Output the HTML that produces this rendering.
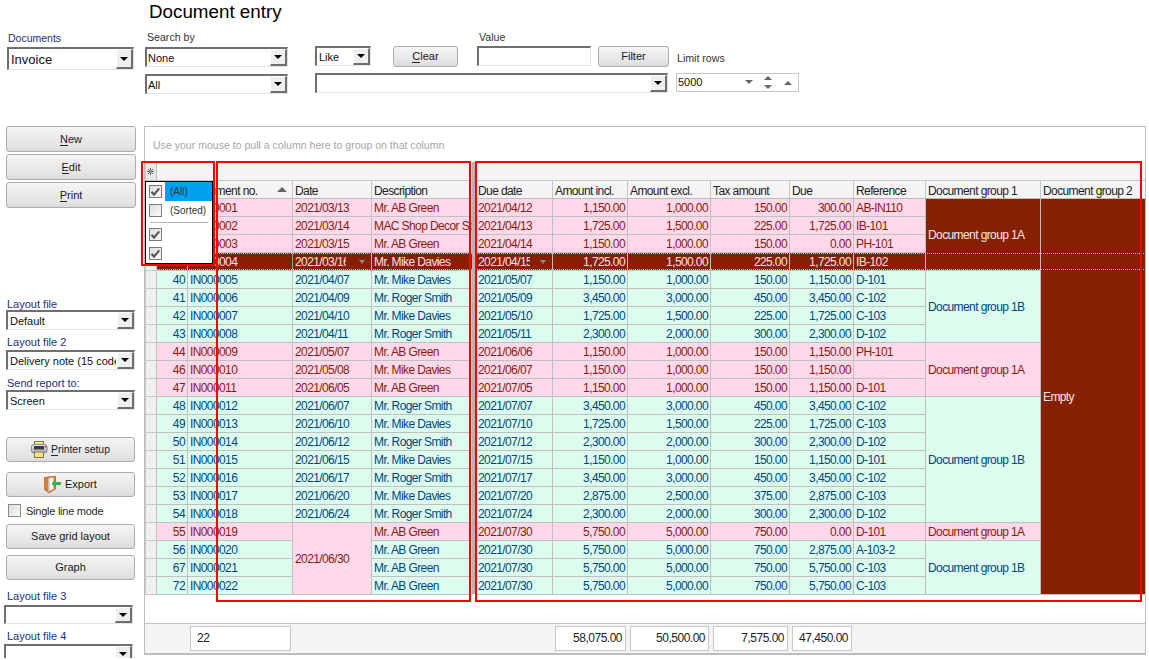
<!DOCTYPE html><html><head><meta charset="utf-8"><style>
*{margin:0;padding:0;box-sizing:border-box}
html,body{width:1149px;height:660px;overflow:hidden;background:#fff}
body{position:relative;font-family:"Liberation Sans",sans-serif;font-size:11px;color:#222}
div{position:absolute}
.t{white-space:nowrap;line-height:13px}
.lbl{white-space:nowrap;line-height:13px;color:#24307a}
.btn{border:1px solid #adadad;border-radius:3px;background:linear-gradient(#f5f5f5,#ebebeb 45%,#e2e2e2 85%,#d9d9d9);color:#1a1a1a;text-align:center;white-space:nowrap}
.cmb{background:#fff;border-top:2px solid #6f6f6f;border-left:2px solid #6f6f6f;border-bottom:1px solid #e3e3e3;border-right:1px solid #e3e3e3}
.cbb{background:#efefef;border-top:1px solid #fff;border-left:1px solid #fff;border-bottom:2px solid #6f6f6f;border-right:2px solid #6f6f6f}
.arr{width:0;height:0;border-left:4px solid transparent;border-right:4px solid transparent;border-top:4px solid #000}
.cell{white-space:nowrap;overflow:hidden;line-height:17px;padding-left:2px;padding-top:1px;font-size:12px;letter-spacing:-0.6px}
.r{text-align:right;padding-left:0;padding-right:2px}
u{text-decoration:none;border-bottom:1px solid #222}
</style></head><body><div class="t" style="left:149px;top:1px;font-size:18.8px;line-height:22px;color:#000">Document entry</div>
<div class="lbl" style="left:8px;top:32px;font-size:10.5px">Documents</div>
<div class="cmb" style="left:7px;top:47px;width:127px;height:23px;"></div>
<div class="cbb" style="left:116px;top:49px;width:17px;height:20px"></div>
<div class="arr" style="left:120px;top:57px"></div>
<div class="t" style="left:11px;top:50px;font-size:13px;line-height:19px;width:104px;overflow:hidden;color:#111">Invoice</div>
<div class="t" style="left:147px;top:31px;font-size:10.6px;color:#333">Search by</div>
<div class="cmb" style="left:145px;top:47px;width:143px;height:20px;"></div>
<div class="cbb" style="left:270px;top:49px;width:17px;height:17px"></div>
<div class="arr" style="left:274px;top:55px"></div>
<div class="t" style="left:148px;top:50px;font-size:11px;line-height:16px;width:120px;overflow:hidden;color:#111">None</div>
<div class="cmb" style="left:145px;top:74px;width:143px;height:20px;"></div>
<div class="cbb" style="left:270px;top:76px;width:17px;height:17px"></div>
<div class="arr" style="left:274px;top:82px"></div>
<div class="t" style="left:148px;top:77px;font-size:11px;line-height:16px;width:120px;overflow:hidden;color:#111">All</div>
<div class="cmb" style="left:315px;top:46px;width:56px;height:20px;"></div>
<div class="cbb" style="left:353px;top:48px;width:17px;height:17px"></div>
<div class="arr" style="left:357px;top:54px"></div>
<div class="t" style="left:319px;top:49px;font-size:11px;line-height:16px;width:33px;overflow:hidden;color:#111">Like</div>
<div class="cmb" style="left:315px;top:73px;width:353px;height:20px;"></div>
<div class="cbb" style="left:650px;top:75px;width:17px;height:17px"></div>
<div class="arr" style="left:654px;top:81px"></div>
<div class="btn" style="left:393px;top:46px;width:65px;height:21px;line-height:19px;"><u>C</u>lear</div>
<div class="t" style="left:479px;top:31px;font-size:10.6px;color:#333">Value</div>
<div class="cmb" style="left:477px;top:46px;width:114px;height:20px"></div>
<div class="btn" style="left:598px;top:46px;width:71px;height:21px;line-height:19px;">Filter</div>
<div class="t" style="left:677px;top:52px;font-size:10.6px;color:#333">Limit rows</div>
<div style="left:676px;top:73px;width:123px;height:19px;border:1px solid #c6c6c6;background:#fff"></div>
<div class="t" style="left:678px;top:76px;font-size:11px;color:#111">5000</div>
<div style="left:745px;top:80px;width:0;height:0;border-left:4px solid transparent;border-right:4px solid transparent;border-top:4px solid #666"></div>
<div style="left:764px;top:76px;width:0;height:0;border-left:4px solid transparent;border-right:4px solid transparent;border-bottom:4px solid #666"></div>
<div style="left:764px;top:85px;width:0;height:0;border-left:4px solid transparent;border-right:4px solid transparent;border-top:4px solid #666"></div>
<div style="left:784px;top:81px;width:0;height:0;border-left:4px solid transparent;border-right:4px solid transparent;border-bottom:4px solid #666"></div>
<div class="btn" style="left:6px;top:126px;width:130px;height:26px;line-height:24px;"><u>N</u>ew</div>
<div class="btn" style="left:6px;top:154px;width:130px;height:26px;line-height:24px;"><u>E</u>dit</div>
<div class="btn" style="left:6px;top:182px;width:130px;height:26px;line-height:24px;"><u>P</u>rint</div>
<div class="lbl" style="left:7px;top:298px;font-size:11px">Layout file</div>
<div class="cmb" style="left:6px;top:310px;width:129px;height:20px;"></div>
<div class="cbb" style="left:117px;top:312px;width:17px;height:17px"></div>
<div class="arr" style="left:121px;top:318px"></div>
<div class="t" style="left:10px;top:313px;font-size:11px;line-height:16px;width:106px;overflow:hidden;color:#111">Default</div>
<div class="lbl" style="left:7px;top:336px;font-size:11px">Layout file 2</div>
<div class="cmb" style="left:6px;top:350px;width:129px;height:20px;"></div>
<div class="cbb" style="left:117px;top:352px;width:17px;height:17px"></div>
<div class="arr" style="left:121px;top:358px"></div>
<div class="t" style="left:10px;top:353px;font-size:11px;line-height:16px;width:106px;overflow:hidden;color:#111">Delivery note (15 code</div>
<div class="lbl" style="left:7px;top:377px;font-size:11px">Send report to:</div>
<div class="cmb" style="left:6px;top:390px;width:129px;height:20px;"></div>
<div class="cbb" style="left:117px;top:392px;width:17px;height:17px"></div>
<div class="arr" style="left:121px;top:398px"></div>
<div class="t" style="left:10px;top:393px;font-size:11px;line-height:16px;width:106px;overflow:hidden;color:#111">Screen</div>
<div class="btn" style="left:6px;top:437px;width:129px;height:25px;line-height:23px;"></div>
<svg style="position:absolute;left:31px;top:441px" width="17" height="17" viewBox="0 0 17 17">
<defs><linearGradient id="pg" x1="0" y1="0" x2="0" y2="1"><stop offset="0" stop-color="#f2f3f7"/><stop offset="1" stop-color="#9ea4b2"/></linearGradient></defs>
<rect x="3.5" y="0.5" width="9" height="4" fill="#f3e68a" stroke="#8a7a3a" stroke-width="1"/>
<rect x="0.5" y="3.5" width="15.5" height="8.5" rx="2.5" fill="url(#pg)" stroke="#7f8595" stroke-width="1"/>
<rect x="3" y="5" width="10" height="3.5" fill="#3a3a3a"/>
<rect x="3.5" y="11" width="9" height="5.5" fill="#f3e68a" stroke="#8a7a3a" stroke-width="1"/>
<rect x="13.6" y="4.8" width="1.6" height="1.6" fill="#e02020"/>
</svg>
<div class="t" style="left:51px;top:443px;font-size:10.4px;color:#1a1a1a"><u>P</u>rinter setup</div>
<div class="btn" style="left:6px;top:472px;width:129px;height:25px;line-height:23px;"></div>
<svg style="position:absolute;left:44px;top:476px" width="18" height="17" viewBox="0 0 18 17">
<path d="M0.5 1.5 L11.5 0.3 L11.5 13 L5 16.8 L0.8 13.8 Z" fill="#e07f2e" stroke="#a8541a" stroke-width="0.7"/>
<path d="M4.5 2.2 L9.5 1.6 L9.5 13 L4.5 15.5 Z" fill="#f4f4f4"/>
<path d="M4.5 2.2 L5.5 2.1 L5.5 15 L4.5 15.5 Z" fill="#bdbdbd"/>
<path d="M7.5 7.5 L11.5 3.3 L11.5 6 L17 6 L17 9 L11.5 9 L11.5 11.7 Z" fill="#2fb54a"/>
</svg>
<div class="t" style="left:65px;top:478px;font-size:11px;color:#1a1a1a">Export</div>
<div style="left:8px;top:504px;width:13px;height:13px;border:1px solid #8a8a8a;background:linear-gradient(135deg,#dcdcdc,#fafafa)"></div>
<div class="t" style="left:26px;top:505px;font-size:11px;letter-spacing:-0.25px;color:#2a2a2a">Single line mode</div>
<div class="btn" style="left:6px;top:524px;width:129px;height:25px;line-height:23px;">Save grid layout</div>
<div class="btn" style="left:6px;top:555px;width:129px;height:25px;line-height:23px;">Graph</div>
<div class="lbl" style="left:7px;top:590px;font-size:11px">Layout file 3</div>
<div class="cmb" style="left:4px;top:605px;width:129px;height:19px;"></div>
<div class="cbb" style="left:115px;top:607px;width:17px;height:16px"></div>
<div class="arr" style="left:119px;top:613px"></div>
<div class="lbl" style="left:7px;top:630px;font-size:11px">Layout file 4</div>
<div class="cmb" style="left:4px;top:644px;width:129px;height:19px;"></div>
<div class="cbb" style="left:115px;top:646px;width:17px;height:16px"></div>
<div class="arr" style="left:119px;top:652px"></div>
<div style="left:0;top:658px;width:150px;height:2px;background:#fff"></div>
<div style="left:144px;top:126px;width:1002px;height:529px;border:1px solid #bdbdbd;border-bottom:2px solid #bdbdbd;background:#fff"></div>
<div class="t" style="left:153px;top:139px;font-size:10.55px;color:#a6a6a6">Use your mouse to pull a column here to group on that column</div>
<div style="left:145px;top:162px;width:1000px;height:19px;background:#f4f4f4;border-top:1px solid #e6e6e6;border-bottom:1px solid #c4c4c4"></div>
<div style="left:145px;top:163px;width:12px;height:17px;background:#e8e8e8;border-left:1px solid #c8c8c8;border-right:1px solid #c0c0c0"></div>
<svg style="position:absolute;left:146px;top:167px" width="9" height="9" viewBox="0 0 9 9"><g stroke="#585858" stroke-width="1">
<line x1="4.5" y1="1" x2="4.5" y2="3.5"/><line x1="4.5" y1="5.5" x2="4.5" y2="8"/><line x1="1" y1="4.5" x2="3.5" y2="4.5"/><line x1="5.5" y1="4.5" x2="8" y2="4.5"/>
<line x1="2" y1="2" x2="3.8" y2="3.8"/><line x1="5.2" y1="5.2" x2="7" y2="7"/><line x1="7" y1="2" x2="5.2" y2="3.8"/><line x1="3.8" y1="5.2" x2="2" y2="7"/></g><rect x="4" y="4" width="1" height="1" fill="#888"/></svg>
<div style="left:145px;top:180px;width:1000px;height:19px;background:#f4f4f4;border-bottom:1px solid #bcbcbc;border-top:1px solid #c6c6c6"></div>
<div style="left:145px;top:181px;width:12px;height:17px;background:#e8e8e8;border-left:1px solid #c8c8c8;border-right:1px solid #c0c0c0"></div>
<div style="left:156px;top:181px;width:1px;height:17px;background:#c0c0c0"></div>
<div class="cell" style="left:188px;top:181px;width:104px;height:17px;color:#222;font-size:12px;line-height:18px;padding-left:2px">Document no.</div>
<div style="left:292px;top:181px;width:1px;height:17px;background:#c6c6c6"></div>
<div class="cell" style="left:293px;top:181px;width:78px;height:17px;color:#222;font-size:12px;line-height:18px;padding-left:2px">Date</div>
<div style="left:371px;top:181px;width:1px;height:17px;background:#c6c6c6"></div>
<div class="cell" style="left:372px;top:181px;width:100px;height:17px;color:#222;font-size:12px;line-height:18px;padding-left:2px">Description</div>
<div style="left:472px;top:181px;width:1px;height:17px;background:#c6c6c6"></div>
<div class="cell" style="left:476px;top:181px;width:76px;height:17px;color:#222;font-size:12px;line-height:18px;padding-left:2px">Due date</div>
<div style="left:552px;top:181px;width:1px;height:17px;background:#c6c6c6"></div>
<div class="cell" style="left:553px;top:181px;width:74px;height:17px;color:#222;font-size:12px;line-height:18px;padding-left:2px">Amount incl.</div>
<div style="left:627px;top:181px;width:1px;height:17px;background:#c6c6c6"></div>
<div class="cell" style="left:628px;top:181px;width:82px;height:17px;color:#222;font-size:12px;line-height:18px;padding-left:2px">Amount excl.</div>
<div style="left:710px;top:181px;width:1px;height:17px;background:#c6c6c6"></div>
<div class="cell" style="left:711px;top:181px;width:78px;height:17px;color:#222;font-size:12px;line-height:18px;padding-left:2px">Tax amount</div>
<div style="left:789px;top:181px;width:1px;height:17px;background:#c6c6c6"></div>
<div class="cell" style="left:790px;top:181px;width:63px;height:17px;color:#222;font-size:12px;line-height:18px;padding-left:2px">Due</div>
<div style="left:853px;top:181px;width:1px;height:17px;background:#c6c6c6"></div>
<div class="cell" style="left:854px;top:181px;width:71px;height:17px;color:#222;font-size:12px;line-height:18px;padding-left:2px">Reference</div>
<div style="left:925px;top:181px;width:1px;height:17px;background:#c6c6c6"></div>
<div class="cell" style="left:926px;top:181px;width:114px;height:17px;color:#222;font-size:12px;line-height:18px;padding-left:2px">Document group 1</div>
<div style="left:1040px;top:181px;width:1px;height:17px;background:#c6c6c6"></div>
<div class="cell" style="left:1041px;top:181px;width:104px;height:17px;color:#222;font-size:12px;line-height:18px;padding-left:2px">Document group 2</div>
<div style="left:1145px;top:181px;width:1px;height:17px;background:#c6c6c6"></div>
<div style="left:277px;top:187px;width:0;height:0;border-left:5px solid transparent;border-right:5px solid transparent;border-bottom:5px solid #666"></div>
<div style="left:145px;top:199px;width:12px;height:18px;background:#f0f0f0;border-bottom:1px solid #c8c8c8;border-left:1px solid #c8c8c8;border-right:1px solid #c0c0c0"></div>
<div class="cell r" style="left:156px;top:199px;width:32px;height:18px;background:#ffd9ea;color:#8a1a10;border:1px solid #c0c0c0;border-top:none;"></div>
<div class="cell" style="left:187px;top:199px;width:106px;height:18px;background:#ffd9ea;color:#8a1a10;border:1px solid #c0c0c0;border-top:none;">IN000001</div>
<div class="cell" style="left:292px;top:199px;width:80px;height:18px;background:#ffd9ea;color:#8a1a10;border:1px solid #c0c0c0;border-top:none;">2021/03/13</div>
<div class="cell" style="left:371px;top:199px;width:102px;height:18px;background:#ffd9ea;color:#8a1a10;border:1px solid #c0c0c0;border-top:none;">Mr. AB Green</div>
<div class="cell" style="left:475px;top:199px;width:78px;height:18px;background:#ffd9ea;color:#8a1a10;border:1px solid #c0c0c0;border-top:none;">2021/04/12</div>
<div class="cell r" style="left:552px;top:199px;width:76px;height:18px;background:#ffd9ea;color:#8a1a10;border:1px solid #c0c0c0;border-top:none;">1,150.00</div>
<div class="cell r" style="left:627px;top:199px;width:84px;height:18px;background:#ffd9ea;color:#8a1a10;border:1px solid #c0c0c0;border-top:none;">1,000.00</div>
<div class="cell r" style="left:710px;top:199px;width:80px;height:18px;background:#ffd9ea;color:#8a1a10;border:1px solid #c0c0c0;border-top:none;">150.00</div>
<div class="cell r" style="left:789px;top:199px;width:65px;height:18px;background:#ffd9ea;color:#8a1a10;border:1px solid #c0c0c0;border-top:none;">300.00</div>
<div class="cell" style="left:853px;top:199px;width:73px;height:18px;background:#ffd9ea;color:#8a1a10;border:1px solid #c0c0c0;border-top:none;">AB-IN110</div>
<div style="left:145px;top:217px;width:12px;height:18px;background:#f0f0f0;border-bottom:1px solid #c8c8c8;border-left:1px solid #c8c8c8;border-right:1px solid #c0c0c0"></div>
<div class="cell r" style="left:156px;top:217px;width:32px;height:18px;background:#ffd9ea;color:#8a1a10;border:1px solid #c0c0c0;border-top:none;"></div>
<div class="cell" style="left:187px;top:217px;width:106px;height:18px;background:#ffd9ea;color:#8a1a10;border:1px solid #c0c0c0;border-top:none;">IN000002</div>
<div class="cell" style="left:292px;top:217px;width:80px;height:18px;background:#ffd9ea;color:#8a1a10;border:1px solid #c0c0c0;border-top:none;">2021/03/14</div>
<div class="cell" style="left:371px;top:217px;width:102px;height:18px;background:#ffd9ea;color:#8a1a10;border:1px solid #c0c0c0;border-top:none;">MAC Shop Decor Sp</div>
<div class="cell" style="left:475px;top:217px;width:78px;height:18px;background:#ffd9ea;color:#8a1a10;border:1px solid #c0c0c0;border-top:none;">2021/04/13</div>
<div class="cell r" style="left:552px;top:217px;width:76px;height:18px;background:#ffd9ea;color:#8a1a10;border:1px solid #c0c0c0;border-top:none;">1,725.00</div>
<div class="cell r" style="left:627px;top:217px;width:84px;height:18px;background:#ffd9ea;color:#8a1a10;border:1px solid #c0c0c0;border-top:none;">1,500.00</div>
<div class="cell r" style="left:710px;top:217px;width:80px;height:18px;background:#ffd9ea;color:#8a1a10;border:1px solid #c0c0c0;border-top:none;">225.00</div>
<div class="cell r" style="left:789px;top:217px;width:65px;height:18px;background:#ffd9ea;color:#8a1a10;border:1px solid #c0c0c0;border-top:none;">1,725.00</div>
<div class="cell" style="left:853px;top:217px;width:73px;height:18px;background:#ffd9ea;color:#8a1a10;border:1px solid #c0c0c0;border-top:none;">IB-101</div>
<div style="left:145px;top:235px;width:12px;height:18px;background:#f0f0f0;border-bottom:1px solid #c8c8c8;border-left:1px solid #c8c8c8;border-right:1px solid #c0c0c0"></div>
<div class="cell r" style="left:156px;top:235px;width:32px;height:18px;background:#ffd9ea;color:#8a1a10;border:1px solid #c0c0c0;border-top:none;"></div>
<div class="cell" style="left:187px;top:235px;width:106px;height:18px;background:#ffd9ea;color:#8a1a10;border:1px solid #c0c0c0;border-top:none;">IN000003</div>
<div class="cell" style="left:292px;top:235px;width:80px;height:18px;background:#ffd9ea;color:#8a1a10;border:1px solid #c0c0c0;border-top:none;">2021/03/15</div>
<div class="cell" style="left:371px;top:235px;width:102px;height:18px;background:#ffd9ea;color:#8a1a10;border:1px solid #c0c0c0;border-top:none;">Mr. AB Green</div>
<div class="cell" style="left:475px;top:235px;width:78px;height:18px;background:#ffd9ea;color:#8a1a10;border:1px solid #c0c0c0;border-top:none;">2021/04/14</div>
<div class="cell r" style="left:552px;top:235px;width:76px;height:18px;background:#ffd9ea;color:#8a1a10;border:1px solid #c0c0c0;border-top:none;">1,150.00</div>
<div class="cell r" style="left:627px;top:235px;width:84px;height:18px;background:#ffd9ea;color:#8a1a10;border:1px solid #c0c0c0;border-top:none;">1,000.00</div>
<div class="cell r" style="left:710px;top:235px;width:80px;height:18px;background:#ffd9ea;color:#8a1a10;border:1px solid #c0c0c0;border-top:none;">150.00</div>
<div class="cell r" style="left:789px;top:235px;width:65px;height:18px;background:#ffd9ea;color:#8a1a10;border:1px solid #c0c0c0;border-top:none;">0.00</div>
<div class="cell" style="left:853px;top:235px;width:73px;height:18px;background:#ffd9ea;color:#8a1a10;border:1px solid #c0c0c0;border-top:none;">PH-101</div>
<div style="left:145px;top:253px;width:12px;height:18px;background:#f0f0f0;border-bottom:1px solid #c8c8c8;border-left:1px solid #c8c8c8;border-right:1px solid #c0c0c0"></div>
<div class="cell r" style="left:156px;top:253px;width:32px;height:18px;background:#852100;color:#ffe2ee;border:1px solid #c0c0c0;border-top:none;"></div>
<div class="cell" style="left:187px;top:253px;width:106px;height:18px;background:#852100;color:#ffe2ee;border:1px solid #c0c0c0;border-top:none;">IN000004</div>
<div class="cell" style="left:292px;top:253px;width:80px;height:18px;background:#852100;color:#ffe2ee;border:1px solid #c0c0c0;border-top:none;"></div>
<div class="cell" style="left:293px;top:253px;width:53px;height:17px;color:#ffe2ee;padding-left:2px">2021/03/16</div>
<div style="left:292px;top:253px;width:1px;height:17px;background:#9a9a9a"></div>
<div class="cell" style="left:371px;top:253px;width:102px;height:18px;background:#852100;color:#ffe2ee;border:1px solid #c0c0c0;border-top:none;">Mr. Mike Davies</div>
<div class="cell" style="left:475px;top:253px;width:78px;height:18px;background:#852100;color:#ffe2ee;border:1px solid #c0c0c0;border-top:none;"></div>
<div class="cell" style="left:476px;top:253px;width:54px;height:17px;color:#ffe2ee;padding-left:2px">2021/04/15</div>
<div style="left:475px;top:253px;width:1px;height:17px;background:#9a9a9a"></div>
<div class="cell r" style="left:552px;top:253px;width:76px;height:18px;background:#852100;color:#ffe2ee;border:1px solid #c0c0c0;border-top:none;">1,725.00</div>
<div class="cell r" style="left:627px;top:253px;width:84px;height:18px;background:#852100;color:#ffe2ee;border:1px solid #c0c0c0;border-top:none;">1,500.00</div>
<div class="cell r" style="left:710px;top:253px;width:80px;height:18px;background:#852100;color:#ffe2ee;border:1px solid #c0c0c0;border-top:none;">225.00</div>
<div class="cell r" style="left:789px;top:253px;width:65px;height:18px;background:#852100;color:#ffe2ee;border:1px solid #c0c0c0;border-top:none;">1,725.00</div>
<div class="cell" style="left:853px;top:253px;width:73px;height:18px;background:#852100;color:#ffe2ee;border:1px solid #c0c0c0;border-top:none;">IB-102</div>
<div style="left:145px;top:271px;width:12px;height:18px;background:#f0f0f0;border-bottom:1px solid #c8c8c8;border-left:1px solid #c8c8c8;border-right:1px solid #c0c0c0"></div>
<div class="cell r" style="left:156px;top:271px;width:32px;height:18px;background:#dcfdee;color:#00467e;border:1px solid #c0c0c0;border-top:none;">40</div>
<div class="cell" style="left:187px;top:271px;width:106px;height:18px;background:#dcfdee;color:#00467e;border:1px solid #c0c0c0;border-top:none;">IN000005</div>
<div class="cell" style="left:292px;top:271px;width:80px;height:18px;background:#dcfdee;color:#00467e;border:1px solid #c0c0c0;border-top:none;">2021/04/07</div>
<div class="cell" style="left:371px;top:271px;width:102px;height:18px;background:#dcfdee;color:#00467e;border:1px solid #c0c0c0;border-top:none;">Mr. Mike Davies</div>
<div class="cell" style="left:475px;top:271px;width:78px;height:18px;background:#dcfdee;color:#00467e;border:1px solid #c0c0c0;border-top:none;">2021/05/07</div>
<div class="cell r" style="left:552px;top:271px;width:76px;height:18px;background:#dcfdee;color:#00467e;border:1px solid #c0c0c0;border-top:none;">1,150.00</div>
<div class="cell r" style="left:627px;top:271px;width:84px;height:18px;background:#dcfdee;color:#00467e;border:1px solid #c0c0c0;border-top:none;">1,000.00</div>
<div class="cell r" style="left:710px;top:271px;width:80px;height:18px;background:#dcfdee;color:#00467e;border:1px solid #c0c0c0;border-top:none;">150.00</div>
<div class="cell r" style="left:789px;top:271px;width:65px;height:18px;background:#dcfdee;color:#00467e;border:1px solid #c0c0c0;border-top:none;">1,150.00</div>
<div class="cell" style="left:853px;top:271px;width:73px;height:18px;background:#dcfdee;color:#00467e;border:1px solid #c0c0c0;border-top:none;">D-101</div>
<div style="left:145px;top:289px;width:12px;height:18px;background:#f0f0f0;border-bottom:1px solid #c8c8c8;border-left:1px solid #c8c8c8;border-right:1px solid #c0c0c0"></div>
<div class="cell r" style="left:156px;top:289px;width:32px;height:18px;background:#dcfdee;color:#00467e;border:1px solid #c0c0c0;border-top:none;">41</div>
<div class="cell" style="left:187px;top:289px;width:106px;height:18px;background:#dcfdee;color:#00467e;border:1px solid #c0c0c0;border-top:none;">IN000006</div>
<div class="cell" style="left:292px;top:289px;width:80px;height:18px;background:#dcfdee;color:#00467e;border:1px solid #c0c0c0;border-top:none;">2021/04/09</div>
<div class="cell" style="left:371px;top:289px;width:102px;height:18px;background:#dcfdee;color:#00467e;border:1px solid #c0c0c0;border-top:none;">Mr. Roger Smith</div>
<div class="cell" style="left:475px;top:289px;width:78px;height:18px;background:#dcfdee;color:#00467e;border:1px solid #c0c0c0;border-top:none;">2021/05/09</div>
<div class="cell r" style="left:552px;top:289px;width:76px;height:18px;background:#dcfdee;color:#00467e;border:1px solid #c0c0c0;border-top:none;">3,450.00</div>
<div class="cell r" style="left:627px;top:289px;width:84px;height:18px;background:#dcfdee;color:#00467e;border:1px solid #c0c0c0;border-top:none;">3,000.00</div>
<div class="cell r" style="left:710px;top:289px;width:80px;height:18px;background:#dcfdee;color:#00467e;border:1px solid #c0c0c0;border-top:none;">450.00</div>
<div class="cell r" style="left:789px;top:289px;width:65px;height:18px;background:#dcfdee;color:#00467e;border:1px solid #c0c0c0;border-top:none;">3,450.00</div>
<div class="cell" style="left:853px;top:289px;width:73px;height:18px;background:#dcfdee;color:#00467e;border:1px solid #c0c0c0;border-top:none;">C-102</div>
<div style="left:145px;top:307px;width:12px;height:18px;background:#f0f0f0;border-bottom:1px solid #c8c8c8;border-left:1px solid #c8c8c8;border-right:1px solid #c0c0c0"></div>
<div class="cell r" style="left:156px;top:307px;width:32px;height:18px;background:#dcfdee;color:#00467e;border:1px solid #c0c0c0;border-top:none;">42</div>
<div class="cell" style="left:187px;top:307px;width:106px;height:18px;background:#dcfdee;color:#00467e;border:1px solid #c0c0c0;border-top:none;">IN000007</div>
<div class="cell" style="left:292px;top:307px;width:80px;height:18px;background:#dcfdee;color:#00467e;border:1px solid #c0c0c0;border-top:none;">2021/04/10</div>
<div class="cell" style="left:371px;top:307px;width:102px;height:18px;background:#dcfdee;color:#00467e;border:1px solid #c0c0c0;border-top:none;">Mr. Mike Davies</div>
<div class="cell" style="left:475px;top:307px;width:78px;height:18px;background:#dcfdee;color:#00467e;border:1px solid #c0c0c0;border-top:none;">2021/05/10</div>
<div class="cell r" style="left:552px;top:307px;width:76px;height:18px;background:#dcfdee;color:#00467e;border:1px solid #c0c0c0;border-top:none;">1,725.00</div>
<div class="cell r" style="left:627px;top:307px;width:84px;height:18px;background:#dcfdee;color:#00467e;border:1px solid #c0c0c0;border-top:none;">1,500.00</div>
<div class="cell r" style="left:710px;top:307px;width:80px;height:18px;background:#dcfdee;color:#00467e;border:1px solid #c0c0c0;border-top:none;">225.00</div>
<div class="cell r" style="left:789px;top:307px;width:65px;height:18px;background:#dcfdee;color:#00467e;border:1px solid #c0c0c0;border-top:none;">1,725.00</div>
<div class="cell" style="left:853px;top:307px;width:73px;height:18px;background:#dcfdee;color:#00467e;border:1px solid #c0c0c0;border-top:none;">C-103</div>
<div style="left:145px;top:325px;width:12px;height:18px;background:#f0f0f0;border-bottom:1px solid #c8c8c8;border-left:1px solid #c8c8c8;border-right:1px solid #c0c0c0"></div>
<div class="cell r" style="left:156px;top:325px;width:32px;height:18px;background:#dcfdee;color:#00467e;border:1px solid #c0c0c0;border-top:none;">43</div>
<div class="cell" style="left:187px;top:325px;width:106px;height:18px;background:#dcfdee;color:#00467e;border:1px solid #c0c0c0;border-top:none;">IN000008</div>
<div class="cell" style="left:292px;top:325px;width:80px;height:18px;background:#dcfdee;color:#00467e;border:1px solid #c0c0c0;border-top:none;">2021/04/11</div>
<div class="cell" style="left:371px;top:325px;width:102px;height:18px;background:#dcfdee;color:#00467e;border:1px solid #c0c0c0;border-top:none;">Mr. Roger Smith</div>
<div class="cell" style="left:475px;top:325px;width:78px;height:18px;background:#dcfdee;color:#00467e;border:1px solid #c0c0c0;border-top:none;">2021/05/11</div>
<div class="cell r" style="left:552px;top:325px;width:76px;height:18px;background:#dcfdee;color:#00467e;border:1px solid #c0c0c0;border-top:none;">2,300.00</div>
<div class="cell r" style="left:627px;top:325px;width:84px;height:18px;background:#dcfdee;color:#00467e;border:1px solid #c0c0c0;border-top:none;">2,000.00</div>
<div class="cell r" style="left:710px;top:325px;width:80px;height:18px;background:#dcfdee;color:#00467e;border:1px solid #c0c0c0;border-top:none;">300.00</div>
<div class="cell r" style="left:789px;top:325px;width:65px;height:18px;background:#dcfdee;color:#00467e;border:1px solid #c0c0c0;border-top:none;">2,300.00</div>
<div class="cell" style="left:853px;top:325px;width:73px;height:18px;background:#dcfdee;color:#00467e;border:1px solid #c0c0c0;border-top:none;">D-102</div>
<div style="left:145px;top:343px;width:12px;height:18px;background:#f0f0f0;border-bottom:1px solid #c8c8c8;border-left:1px solid #c8c8c8;border-right:1px solid #c0c0c0"></div>
<div class="cell r" style="left:156px;top:343px;width:32px;height:18px;background:#ffd9ea;color:#8a1a10;border:1px solid #c0c0c0;border-top:none;">44</div>
<div class="cell" style="left:187px;top:343px;width:106px;height:18px;background:#ffd9ea;color:#8a1a10;border:1px solid #c0c0c0;border-top:none;">IN000009</div>
<div class="cell" style="left:292px;top:343px;width:80px;height:18px;background:#ffd9ea;color:#8a1a10;border:1px solid #c0c0c0;border-top:none;">2021/05/07</div>
<div class="cell" style="left:371px;top:343px;width:102px;height:18px;background:#ffd9ea;color:#8a1a10;border:1px solid #c0c0c0;border-top:none;">Mr. AB Green</div>
<div class="cell" style="left:475px;top:343px;width:78px;height:18px;background:#ffd9ea;color:#8a1a10;border:1px solid #c0c0c0;border-top:none;">2021/06/06</div>
<div class="cell r" style="left:552px;top:343px;width:76px;height:18px;background:#ffd9ea;color:#8a1a10;border:1px solid #c0c0c0;border-top:none;">1,150.00</div>
<div class="cell r" style="left:627px;top:343px;width:84px;height:18px;background:#ffd9ea;color:#8a1a10;border:1px solid #c0c0c0;border-top:none;">1,000.00</div>
<div class="cell r" style="left:710px;top:343px;width:80px;height:18px;background:#ffd9ea;color:#8a1a10;border:1px solid #c0c0c0;border-top:none;">150.00</div>
<div class="cell r" style="left:789px;top:343px;width:65px;height:18px;background:#ffd9ea;color:#8a1a10;border:1px solid #c0c0c0;border-top:none;">1,150.00</div>
<div class="cell" style="left:853px;top:343px;width:73px;height:18px;background:#ffd9ea;color:#8a1a10;border:1px solid #c0c0c0;border-top:none;">PH-101</div>
<div style="left:145px;top:361px;width:12px;height:18px;background:#f0f0f0;border-bottom:1px solid #c8c8c8;border-left:1px solid #c8c8c8;border-right:1px solid #c0c0c0"></div>
<div class="cell r" style="left:156px;top:361px;width:32px;height:18px;background:#ffd9ea;color:#8a1a10;border:1px solid #c0c0c0;border-top:none;">46</div>
<div class="cell" style="left:187px;top:361px;width:106px;height:18px;background:#ffd9ea;color:#8a1a10;border:1px solid #c0c0c0;border-top:none;">IN000010</div>
<div class="cell" style="left:292px;top:361px;width:80px;height:18px;background:#ffd9ea;color:#8a1a10;border:1px solid #c0c0c0;border-top:none;">2021/05/08</div>
<div class="cell" style="left:371px;top:361px;width:102px;height:18px;background:#ffd9ea;color:#8a1a10;border:1px solid #c0c0c0;border-top:none;">Mr. Mike Davies</div>
<div class="cell" style="left:475px;top:361px;width:78px;height:18px;background:#ffd9ea;color:#8a1a10;border:1px solid #c0c0c0;border-top:none;">2021/06/07</div>
<div class="cell r" style="left:552px;top:361px;width:76px;height:18px;background:#ffd9ea;color:#8a1a10;border:1px solid #c0c0c0;border-top:none;">1,150.00</div>
<div class="cell r" style="left:627px;top:361px;width:84px;height:18px;background:#ffd9ea;color:#8a1a10;border:1px solid #c0c0c0;border-top:none;">1,000.00</div>
<div class="cell r" style="left:710px;top:361px;width:80px;height:18px;background:#ffd9ea;color:#8a1a10;border:1px solid #c0c0c0;border-top:none;">150.00</div>
<div class="cell r" style="left:789px;top:361px;width:65px;height:18px;background:#ffd9ea;color:#8a1a10;border:1px solid #c0c0c0;border-top:none;">1,150.00</div>
<div class="cell" style="left:853px;top:361px;width:73px;height:18px;background:#ffd9ea;color:#8a1a10;border:1px solid #c0c0c0;border-top:none;"></div>
<div style="left:145px;top:379px;width:12px;height:18px;background:#f0f0f0;border-bottom:1px solid #c8c8c8;border-left:1px solid #c8c8c8;border-right:1px solid #c0c0c0"></div>
<div class="cell r" style="left:156px;top:379px;width:32px;height:18px;background:#ffd9ea;color:#8a1a10;border:1px solid #c0c0c0;border-top:none;">47</div>
<div class="cell" style="left:187px;top:379px;width:106px;height:18px;background:#ffd9ea;color:#8a1a10;border:1px solid #c0c0c0;border-top:none;">IN000011</div>
<div class="cell" style="left:292px;top:379px;width:80px;height:18px;background:#ffd9ea;color:#8a1a10;border:1px solid #c0c0c0;border-top:none;">2021/06/05</div>
<div class="cell" style="left:371px;top:379px;width:102px;height:18px;background:#ffd9ea;color:#8a1a10;border:1px solid #c0c0c0;border-top:none;">Mr. AB Green</div>
<div class="cell" style="left:475px;top:379px;width:78px;height:18px;background:#ffd9ea;color:#8a1a10;border:1px solid #c0c0c0;border-top:none;">2021/07/05</div>
<div class="cell r" style="left:552px;top:379px;width:76px;height:18px;background:#ffd9ea;color:#8a1a10;border:1px solid #c0c0c0;border-top:none;">1,150.00</div>
<div class="cell r" style="left:627px;top:379px;width:84px;height:18px;background:#ffd9ea;color:#8a1a10;border:1px solid #c0c0c0;border-top:none;">1,000.00</div>
<div class="cell r" style="left:710px;top:379px;width:80px;height:18px;background:#ffd9ea;color:#8a1a10;border:1px solid #c0c0c0;border-top:none;">150.00</div>
<div class="cell r" style="left:789px;top:379px;width:65px;height:18px;background:#ffd9ea;color:#8a1a10;border:1px solid #c0c0c0;border-top:none;">1,150.00</div>
<div class="cell" style="left:853px;top:379px;width:73px;height:18px;background:#ffd9ea;color:#8a1a10;border:1px solid #c0c0c0;border-top:none;">D-101</div>
<div style="left:145px;top:397px;width:12px;height:18px;background:#f0f0f0;border-bottom:1px solid #c8c8c8;border-left:1px solid #c8c8c8;border-right:1px solid #c0c0c0"></div>
<div class="cell r" style="left:156px;top:397px;width:32px;height:18px;background:#dcfdee;color:#00467e;border:1px solid #c0c0c0;border-top:none;">48</div>
<div class="cell" style="left:187px;top:397px;width:106px;height:18px;background:#dcfdee;color:#00467e;border:1px solid #c0c0c0;border-top:none;">IN000012</div>
<div class="cell" style="left:292px;top:397px;width:80px;height:18px;background:#dcfdee;color:#00467e;border:1px solid #c0c0c0;border-top:none;">2021/06/07</div>
<div class="cell" style="left:371px;top:397px;width:102px;height:18px;background:#dcfdee;color:#00467e;border:1px solid #c0c0c0;border-top:none;">Mr. Roger Smith</div>
<div class="cell" style="left:475px;top:397px;width:78px;height:18px;background:#dcfdee;color:#00467e;border:1px solid #c0c0c0;border-top:none;">2021/07/07</div>
<div class="cell r" style="left:552px;top:397px;width:76px;height:18px;background:#dcfdee;color:#00467e;border:1px solid #c0c0c0;border-top:none;">3,450.00</div>
<div class="cell r" style="left:627px;top:397px;width:84px;height:18px;background:#dcfdee;color:#00467e;border:1px solid #c0c0c0;border-top:none;">3,000.00</div>
<div class="cell r" style="left:710px;top:397px;width:80px;height:18px;background:#dcfdee;color:#00467e;border:1px solid #c0c0c0;border-top:none;">450.00</div>
<div class="cell r" style="left:789px;top:397px;width:65px;height:18px;background:#dcfdee;color:#00467e;border:1px solid #c0c0c0;border-top:none;">3,450.00</div>
<div class="cell" style="left:853px;top:397px;width:73px;height:18px;background:#dcfdee;color:#00467e;border:1px solid #c0c0c0;border-top:none;">C-102</div>
<div style="left:145px;top:415px;width:12px;height:18px;background:#f0f0f0;border-bottom:1px solid #c8c8c8;border-left:1px solid #c8c8c8;border-right:1px solid #c0c0c0"></div>
<div class="cell r" style="left:156px;top:415px;width:32px;height:18px;background:#dcfdee;color:#00467e;border:1px solid #c0c0c0;border-top:none;">49</div>
<div class="cell" style="left:187px;top:415px;width:106px;height:18px;background:#dcfdee;color:#00467e;border:1px solid #c0c0c0;border-top:none;">IN000013</div>
<div class="cell" style="left:292px;top:415px;width:80px;height:18px;background:#dcfdee;color:#00467e;border:1px solid #c0c0c0;border-top:none;">2021/06/10</div>
<div class="cell" style="left:371px;top:415px;width:102px;height:18px;background:#dcfdee;color:#00467e;border:1px solid #c0c0c0;border-top:none;">Mr. Mike Davies</div>
<div class="cell" style="left:475px;top:415px;width:78px;height:18px;background:#dcfdee;color:#00467e;border:1px solid #c0c0c0;border-top:none;">2021/07/10</div>
<div class="cell r" style="left:552px;top:415px;width:76px;height:18px;background:#dcfdee;color:#00467e;border:1px solid #c0c0c0;border-top:none;">1,725.00</div>
<div class="cell r" style="left:627px;top:415px;width:84px;height:18px;background:#dcfdee;color:#00467e;border:1px solid #c0c0c0;border-top:none;">1,500.00</div>
<div class="cell r" style="left:710px;top:415px;width:80px;height:18px;background:#dcfdee;color:#00467e;border:1px solid #c0c0c0;border-top:none;">225.00</div>
<div class="cell r" style="left:789px;top:415px;width:65px;height:18px;background:#dcfdee;color:#00467e;border:1px solid #c0c0c0;border-top:none;">1,725.00</div>
<div class="cell" style="left:853px;top:415px;width:73px;height:18px;background:#dcfdee;color:#00467e;border:1px solid #c0c0c0;border-top:none;">C-103</div>
<div style="left:145px;top:433px;width:12px;height:18px;background:#f0f0f0;border-bottom:1px solid #c8c8c8;border-left:1px solid #c8c8c8;border-right:1px solid #c0c0c0"></div>
<div class="cell r" style="left:156px;top:433px;width:32px;height:18px;background:#dcfdee;color:#00467e;border:1px solid #c0c0c0;border-top:none;">50</div>
<div class="cell" style="left:187px;top:433px;width:106px;height:18px;background:#dcfdee;color:#00467e;border:1px solid #c0c0c0;border-top:none;">IN000014</div>
<div class="cell" style="left:292px;top:433px;width:80px;height:18px;background:#dcfdee;color:#00467e;border:1px solid #c0c0c0;border-top:none;">2021/06/12</div>
<div class="cell" style="left:371px;top:433px;width:102px;height:18px;background:#dcfdee;color:#00467e;border:1px solid #c0c0c0;border-top:none;">Mr. Roger Smith</div>
<div class="cell" style="left:475px;top:433px;width:78px;height:18px;background:#dcfdee;color:#00467e;border:1px solid #c0c0c0;border-top:none;">2021/07/12</div>
<div class="cell r" style="left:552px;top:433px;width:76px;height:18px;background:#dcfdee;color:#00467e;border:1px solid #c0c0c0;border-top:none;">2,300.00</div>
<div class="cell r" style="left:627px;top:433px;width:84px;height:18px;background:#dcfdee;color:#00467e;border:1px solid #c0c0c0;border-top:none;">2,000.00</div>
<div class="cell r" style="left:710px;top:433px;width:80px;height:18px;background:#dcfdee;color:#00467e;border:1px solid #c0c0c0;border-top:none;">300.00</div>
<div class="cell r" style="left:789px;top:433px;width:65px;height:18px;background:#dcfdee;color:#00467e;border:1px solid #c0c0c0;border-top:none;">2,300.00</div>
<div class="cell" style="left:853px;top:433px;width:73px;height:18px;background:#dcfdee;color:#00467e;border:1px solid #c0c0c0;border-top:none;">D-102</div>
<div style="left:145px;top:451px;width:12px;height:18px;background:#f0f0f0;border-bottom:1px solid #c8c8c8;border-left:1px solid #c8c8c8;border-right:1px solid #c0c0c0"></div>
<div class="cell r" style="left:156px;top:451px;width:32px;height:18px;background:#dcfdee;color:#00467e;border:1px solid #c0c0c0;border-top:none;">51</div>
<div class="cell" style="left:187px;top:451px;width:106px;height:18px;background:#dcfdee;color:#00467e;border:1px solid #c0c0c0;border-top:none;">IN000015</div>
<div class="cell" style="left:292px;top:451px;width:80px;height:18px;background:#dcfdee;color:#00467e;border:1px solid #c0c0c0;border-top:none;">2021/06/15</div>
<div class="cell" style="left:371px;top:451px;width:102px;height:18px;background:#dcfdee;color:#00467e;border:1px solid #c0c0c0;border-top:none;">Mr. Mike Davies</div>
<div class="cell" style="left:475px;top:451px;width:78px;height:18px;background:#dcfdee;color:#00467e;border:1px solid #c0c0c0;border-top:none;">2021/07/15</div>
<div class="cell r" style="left:552px;top:451px;width:76px;height:18px;background:#dcfdee;color:#00467e;border:1px solid #c0c0c0;border-top:none;">1,150.00</div>
<div class="cell r" style="left:627px;top:451px;width:84px;height:18px;background:#dcfdee;color:#00467e;border:1px solid #c0c0c0;border-top:none;">1,000.00</div>
<div class="cell r" style="left:710px;top:451px;width:80px;height:18px;background:#dcfdee;color:#00467e;border:1px solid #c0c0c0;border-top:none;">150.00</div>
<div class="cell r" style="left:789px;top:451px;width:65px;height:18px;background:#dcfdee;color:#00467e;border:1px solid #c0c0c0;border-top:none;">1,150.00</div>
<div class="cell" style="left:853px;top:451px;width:73px;height:18px;background:#dcfdee;color:#00467e;border:1px solid #c0c0c0;border-top:none;">D-101</div>
<div style="left:145px;top:469px;width:12px;height:18px;background:#f0f0f0;border-bottom:1px solid #c8c8c8;border-left:1px solid #c8c8c8;border-right:1px solid #c0c0c0"></div>
<div class="cell r" style="left:156px;top:469px;width:32px;height:18px;background:#dcfdee;color:#00467e;border:1px solid #c0c0c0;border-top:none;">52</div>
<div class="cell" style="left:187px;top:469px;width:106px;height:18px;background:#dcfdee;color:#00467e;border:1px solid #c0c0c0;border-top:none;">IN000016</div>
<div class="cell" style="left:292px;top:469px;width:80px;height:18px;background:#dcfdee;color:#00467e;border:1px solid #c0c0c0;border-top:none;">2021/06/17</div>
<div class="cell" style="left:371px;top:469px;width:102px;height:18px;background:#dcfdee;color:#00467e;border:1px solid #c0c0c0;border-top:none;">Mr. Roger Smith</div>
<div class="cell" style="left:475px;top:469px;width:78px;height:18px;background:#dcfdee;color:#00467e;border:1px solid #c0c0c0;border-top:none;">2021/07/17</div>
<div class="cell r" style="left:552px;top:469px;width:76px;height:18px;background:#dcfdee;color:#00467e;border:1px solid #c0c0c0;border-top:none;">3,450.00</div>
<div class="cell r" style="left:627px;top:469px;width:84px;height:18px;background:#dcfdee;color:#00467e;border:1px solid #c0c0c0;border-top:none;">3,000.00</div>
<div class="cell r" style="left:710px;top:469px;width:80px;height:18px;background:#dcfdee;color:#00467e;border:1px solid #c0c0c0;border-top:none;">450.00</div>
<div class="cell r" style="left:789px;top:469px;width:65px;height:18px;background:#dcfdee;color:#00467e;border:1px solid #c0c0c0;border-top:none;">3,450.00</div>
<div class="cell" style="left:853px;top:469px;width:73px;height:18px;background:#dcfdee;color:#00467e;border:1px solid #c0c0c0;border-top:none;">C-102</div>
<div style="left:145px;top:487px;width:12px;height:18px;background:#f0f0f0;border-bottom:1px solid #c8c8c8;border-left:1px solid #c8c8c8;border-right:1px solid #c0c0c0"></div>
<div class="cell r" style="left:156px;top:487px;width:32px;height:18px;background:#dcfdee;color:#00467e;border:1px solid #c0c0c0;border-top:none;">53</div>
<div class="cell" style="left:187px;top:487px;width:106px;height:18px;background:#dcfdee;color:#00467e;border:1px solid #c0c0c0;border-top:none;">IN000017</div>
<div class="cell" style="left:292px;top:487px;width:80px;height:18px;background:#dcfdee;color:#00467e;border:1px solid #c0c0c0;border-top:none;">2021/06/20</div>
<div class="cell" style="left:371px;top:487px;width:102px;height:18px;background:#dcfdee;color:#00467e;border:1px solid #c0c0c0;border-top:none;">Mr. Mike Davies</div>
<div class="cell" style="left:475px;top:487px;width:78px;height:18px;background:#dcfdee;color:#00467e;border:1px solid #c0c0c0;border-top:none;">2021/07/20</div>
<div class="cell r" style="left:552px;top:487px;width:76px;height:18px;background:#dcfdee;color:#00467e;border:1px solid #c0c0c0;border-top:none;">2,875.00</div>
<div class="cell r" style="left:627px;top:487px;width:84px;height:18px;background:#dcfdee;color:#00467e;border:1px solid #c0c0c0;border-top:none;">2,500.00</div>
<div class="cell r" style="left:710px;top:487px;width:80px;height:18px;background:#dcfdee;color:#00467e;border:1px solid #c0c0c0;border-top:none;">375.00</div>
<div class="cell r" style="left:789px;top:487px;width:65px;height:18px;background:#dcfdee;color:#00467e;border:1px solid #c0c0c0;border-top:none;">2,875.00</div>
<div class="cell" style="left:853px;top:487px;width:73px;height:18px;background:#dcfdee;color:#00467e;border:1px solid #c0c0c0;border-top:none;">C-103</div>
<div style="left:145px;top:505px;width:12px;height:18px;background:#f0f0f0;border-bottom:1px solid #c8c8c8;border-left:1px solid #c8c8c8;border-right:1px solid #c0c0c0"></div>
<div class="cell r" style="left:156px;top:505px;width:32px;height:18px;background:#dcfdee;color:#00467e;border:1px solid #c0c0c0;border-top:none;">54</div>
<div class="cell" style="left:187px;top:505px;width:106px;height:18px;background:#dcfdee;color:#00467e;border:1px solid #c0c0c0;border-top:none;">IN000018</div>
<div class="cell" style="left:292px;top:505px;width:80px;height:18px;background:#dcfdee;color:#00467e;border:1px solid #c0c0c0;border-top:none;">2021/06/24</div>
<div class="cell" style="left:371px;top:505px;width:102px;height:18px;background:#dcfdee;color:#00467e;border:1px solid #c0c0c0;border-top:none;">Mr. Roger Smith</div>
<div class="cell" style="left:475px;top:505px;width:78px;height:18px;background:#dcfdee;color:#00467e;border:1px solid #c0c0c0;border-top:none;">2021/07/24</div>
<div class="cell r" style="left:552px;top:505px;width:76px;height:18px;background:#dcfdee;color:#00467e;border:1px solid #c0c0c0;border-top:none;">2,300.00</div>
<div class="cell r" style="left:627px;top:505px;width:84px;height:18px;background:#dcfdee;color:#00467e;border:1px solid #c0c0c0;border-top:none;">2,000.00</div>
<div class="cell r" style="left:710px;top:505px;width:80px;height:18px;background:#dcfdee;color:#00467e;border:1px solid #c0c0c0;border-top:none;">300.00</div>
<div class="cell r" style="left:789px;top:505px;width:65px;height:18px;background:#dcfdee;color:#00467e;border:1px solid #c0c0c0;border-top:none;">2,300.00</div>
<div class="cell" style="left:853px;top:505px;width:73px;height:18px;background:#dcfdee;color:#00467e;border:1px solid #c0c0c0;border-top:none;">D-102</div>
<div style="left:145px;top:523px;width:12px;height:18px;background:#f0f0f0;border-bottom:1px solid #c8c8c8;border-left:1px solid #c8c8c8;border-right:1px solid #c0c0c0"></div>
<div class="cell r" style="left:156px;top:523px;width:32px;height:18px;background:#ffd9ea;color:#8a1a10;border:1px solid #c0c0c0;border-top:none;">55</div>
<div class="cell" style="left:187px;top:523px;width:106px;height:18px;background:#ffd9ea;color:#8a1a10;border:1px solid #c0c0c0;border-top:none;">IN000019</div>
<div class="cell" style="left:371px;top:523px;width:102px;height:18px;background:#ffd9ea;color:#8a1a10;border:1px solid #c0c0c0;border-top:none;">Mr. AB Green</div>
<div class="cell" style="left:475px;top:523px;width:78px;height:18px;background:#ffd9ea;color:#8a1a10;border:1px solid #c0c0c0;border-top:none;">2021/07/30</div>
<div class="cell r" style="left:552px;top:523px;width:76px;height:18px;background:#ffd9ea;color:#8a1a10;border:1px solid #c0c0c0;border-top:none;">5,750.00</div>
<div class="cell r" style="left:627px;top:523px;width:84px;height:18px;background:#ffd9ea;color:#8a1a10;border:1px solid #c0c0c0;border-top:none;">5,000.00</div>
<div class="cell r" style="left:710px;top:523px;width:80px;height:18px;background:#ffd9ea;color:#8a1a10;border:1px solid #c0c0c0;border-top:none;">750.00</div>
<div class="cell r" style="left:789px;top:523px;width:65px;height:18px;background:#ffd9ea;color:#8a1a10;border:1px solid #c0c0c0;border-top:none;">0.00</div>
<div class="cell" style="left:853px;top:523px;width:73px;height:18px;background:#ffd9ea;color:#8a1a10;border:1px solid #c0c0c0;border-top:none;">D-101</div>
<div style="left:145px;top:541px;width:12px;height:18px;background:#f0f0f0;border-bottom:1px solid #c8c8c8;border-left:1px solid #c8c8c8;border-right:1px solid #c0c0c0"></div>
<div class="cell r" style="left:156px;top:541px;width:32px;height:18px;background:#dcfdee;color:#00467e;border:1px solid #c0c0c0;border-top:none;">56</div>
<div class="cell" style="left:187px;top:541px;width:106px;height:18px;background:#dcfdee;color:#00467e;border:1px solid #c0c0c0;border-top:none;">IN000020</div>
<div class="cell" style="left:371px;top:541px;width:102px;height:18px;background:#dcfdee;color:#00467e;border:1px solid #c0c0c0;border-top:none;">Mr. AB Green</div>
<div class="cell" style="left:475px;top:541px;width:78px;height:18px;background:#dcfdee;color:#00467e;border:1px solid #c0c0c0;border-top:none;">2021/07/30</div>
<div class="cell r" style="left:552px;top:541px;width:76px;height:18px;background:#dcfdee;color:#00467e;border:1px solid #c0c0c0;border-top:none;">5,750.00</div>
<div class="cell r" style="left:627px;top:541px;width:84px;height:18px;background:#dcfdee;color:#00467e;border:1px solid #c0c0c0;border-top:none;">5,000.00</div>
<div class="cell r" style="left:710px;top:541px;width:80px;height:18px;background:#dcfdee;color:#00467e;border:1px solid #c0c0c0;border-top:none;">750.00</div>
<div class="cell r" style="left:789px;top:541px;width:65px;height:18px;background:#dcfdee;color:#00467e;border:1px solid #c0c0c0;border-top:none;">2,875.00</div>
<div class="cell" style="left:853px;top:541px;width:73px;height:18px;background:#dcfdee;color:#00467e;border:1px solid #c0c0c0;border-top:none;">A-103-2</div>
<div style="left:145px;top:559px;width:12px;height:18px;background:#f0f0f0;border-bottom:1px solid #c8c8c8;border-left:1px solid #c8c8c8;border-right:1px solid #c0c0c0"></div>
<div class="cell r" style="left:156px;top:559px;width:32px;height:18px;background:#dcfdee;color:#00467e;border:1px solid #c0c0c0;border-top:none;">67</div>
<div class="cell" style="left:187px;top:559px;width:106px;height:18px;background:#dcfdee;color:#00467e;border:1px solid #c0c0c0;border-top:none;">IN000021</div>
<div class="cell" style="left:371px;top:559px;width:102px;height:18px;background:#dcfdee;color:#00467e;border:1px solid #c0c0c0;border-top:none;">Mr. AB Green</div>
<div class="cell" style="left:475px;top:559px;width:78px;height:18px;background:#dcfdee;color:#00467e;border:1px solid #c0c0c0;border-top:none;">2021/07/30</div>
<div class="cell r" style="left:552px;top:559px;width:76px;height:18px;background:#dcfdee;color:#00467e;border:1px solid #c0c0c0;border-top:none;">5,750.00</div>
<div class="cell r" style="left:627px;top:559px;width:84px;height:18px;background:#dcfdee;color:#00467e;border:1px solid #c0c0c0;border-top:none;">5,000.00</div>
<div class="cell r" style="left:710px;top:559px;width:80px;height:18px;background:#dcfdee;color:#00467e;border:1px solid #c0c0c0;border-top:none;">750.00</div>
<div class="cell r" style="left:789px;top:559px;width:65px;height:18px;background:#dcfdee;color:#00467e;border:1px solid #c0c0c0;border-top:none;">5,750.00</div>
<div class="cell" style="left:853px;top:559px;width:73px;height:18px;background:#dcfdee;color:#00467e;border:1px solid #c0c0c0;border-top:none;">C-103</div>
<div style="left:145px;top:577px;width:12px;height:18px;background:#f0f0f0;border-bottom:1px solid #c8c8c8;border-left:1px solid #c8c8c8;border-right:1px solid #c0c0c0"></div>
<div class="cell r" style="left:156px;top:577px;width:32px;height:18px;background:#dcfdee;color:#00467e;border:1px solid #c0c0c0;border-top:none;">72</div>
<div class="cell" style="left:187px;top:577px;width:106px;height:18px;background:#dcfdee;color:#00467e;border:1px solid #c0c0c0;border-top:none;">IN000022</div>
<div class="cell" style="left:371px;top:577px;width:102px;height:18px;background:#dcfdee;color:#00467e;border:1px solid #c0c0c0;border-top:none;">Mr. AB Green</div>
<div class="cell" style="left:475px;top:577px;width:78px;height:18px;background:#dcfdee;color:#00467e;border:1px solid #c0c0c0;border-top:none;">2021/07/30</div>
<div class="cell r" style="left:552px;top:577px;width:76px;height:18px;background:#dcfdee;color:#00467e;border:1px solid #c0c0c0;border-top:none;">5,750.00</div>
<div class="cell r" style="left:627px;top:577px;width:84px;height:18px;background:#dcfdee;color:#00467e;border:1px solid #c0c0c0;border-top:none;">5,000.00</div>
<div class="cell r" style="left:710px;top:577px;width:80px;height:18px;background:#dcfdee;color:#00467e;border:1px solid #c0c0c0;border-top:none;">750.00</div>
<div class="cell r" style="left:789px;top:577px;width:65px;height:18px;background:#dcfdee;color:#00467e;border:1px solid #c0c0c0;border-top:none;">5,750.00</div>
<div class="cell" style="left:853px;top:577px;width:73px;height:18px;background:#dcfdee;color:#00467e;border:1px solid #c0c0c0;border-top:none;">C-103</div>
<div class="cell" style="left:292px;top:523px;width:80px;height:72px;background:#ffd9ea;color:#8a1a10;border:1px solid #c0c0c0;border-top:none;line-height:71px">2021/06/30</div>
<div style="left:472px;top:162px;width:3px;height:432px;background:#b4b4b4"></div>
<div class="cell" style="left:925px;top:199px;width:116px;height:72px;background:#852100;color:#ffe2ee;border:1px solid #c0c0c0;border-top:none;line-height:71px">Document group 1A</div>
<div class="cell" style="left:925px;top:271px;width:116px;height:72px;background:#dcfdee;color:#00467e;border:1px solid #c0c0c0;border-top:none;line-height:71px">Document group 1B</div>
<div class="cell" style="left:925px;top:343px;width:116px;height:54px;background:#ffd9ea;color:#8a1a10;border:1px solid #c0c0c0;border-top:none;line-height:53px">Document group 1A</div>
<div class="cell" style="left:925px;top:397px;width:116px;height:126px;background:#dcfdee;color:#00467e;border:1px solid #c0c0c0;border-top:none;line-height:125px">Document group 1B</div>
<div class="cell" style="left:925px;top:523px;width:116px;height:18px;background:#ffd9ea;color:#8a1a10;border:1px solid #c0c0c0;border-top:none;line-height:17px">Document group 1A</div>
<div class="cell" style="left:925px;top:541px;width:116px;height:54px;background:#dcfdee;color:#00467e;border:1px solid #c0c0c0;border-top:none;line-height:53px">Document group 1B</div>
<div class="cell" style="left:1040px;top:199px;width:105px;height:396px;background:#852100;color:#ffe2ee;border-left:1px solid #c0c0c0;border-bottom:1px solid #c0c0c0;line-height:395px">Empty</div>
<div style="left:157px;top:253px;width:988px;height:1px;background:repeating-linear-gradient(90deg,#7fd8f0 0 1px,transparent 1px 2px)"></div>
<div style="left:157px;top:269px;width:988px;height:1px;background:repeating-linear-gradient(90deg,#7fd8f0 0 1px,transparent 1px 2px)"></div>
<div style="left:359px;top:260px;width:0;height:0;border-left:3.5px solid transparent;border-right:3.5px solid transparent;border-top:4px solid #8a8a8a"></div>
<div style="left:540px;top:260px;width:0;height:0;border-left:3.5px solid transparent;border-right:3.5px solid transparent;border-top:4px solid #8a8a8a"></div>
<div style="left:145px;top:623px;width:1000px;height:30px;background:#f4f4f4;border-top:1px solid #c6c6c6"></div>
<div style="left:190px;top:626px;width:101px;height:25px;background:#fff;border:1px solid #c8c8c8;line-height:23px;text-align:left;padding-left:6px;color:#222;white-space:nowrap;font-size:12px;letter-spacing:-0.5px">22</div>
<div style="left:555px;top:626px;width:71px;height:25px;background:#fff;border:1px solid #c8c8c8;line-height:23px;text-align:right;padding-right:3px;color:#222;white-space:nowrap;font-size:12px;letter-spacing:-0.5px">58,075.00</div>
<div style="left:630px;top:626px;width:79px;height:25px;background:#fff;border:1px solid #c8c8c8;line-height:23px;text-align:right;padding-right:3px;color:#222;white-space:nowrap;font-size:12px;letter-spacing:-0.5px">50,500.00</div>
<div style="left:713px;top:626px;width:75px;height:25px;background:#fff;border:1px solid #c8c8c8;line-height:23px;text-align:right;padding-right:3px;color:#222;white-space:nowrap;font-size:12px;letter-spacing:-0.5px">7,575.00</div>
<div style="left:792px;top:626px;width:60px;height:25px;background:#fff;border:1px solid #c8c8c8;line-height:23px;text-align:right;padding-right:3px;color:#222;white-space:nowrap;font-size:12px;letter-spacing:-0.5px">47,450.00</div>
<div style="left:145px;top:181px;width:68px;height:83px;background:#fff;border:1px solid #000"></div>
<div style="left:165px;top:182px;width:47px;height:19px;background:#00a2f0"></div>
<div style="left:149px;top:185px;width:13px;height:13px;border:1px solid #7a7a7a;background:linear-gradient(135deg,#dedede,#fbfbfb)"></div>
<svg style="position:absolute;left:149px;top:185px" width="13" height="13" viewBox="0 0 13 13"><path d="M2.5 6.8 L5 9.6 L10.2 3.4" fill="none" stroke="#555" stroke-width="2.1"/></svg>
<div style="left:149px;top:204px;width:13px;height:13px;border:1px solid #7a7a7a;background:linear-gradient(135deg,#dedede,#fbfbfb)"></div>
<div style="left:149px;top:228px;width:13px;height:13px;border:1px solid #7a7a7a;background:linear-gradient(135deg,#dedede,#fbfbfb)"></div>
<svg style="position:absolute;left:149px;top:228px" width="13" height="13" viewBox="0 0 13 13"><path d="M2.5 6.8 L5 9.6 L10.2 3.4" fill="none" stroke="#555" stroke-width="2.1"/></svg>
<div style="left:149px;top:247px;width:13px;height:13px;border:1px solid #7a7a7a;background:linear-gradient(135deg,#dedede,#fbfbfb)"></div>
<svg style="position:absolute;left:149px;top:247px" width="13" height="13" viewBox="0 0 13 13"><path d="M2.5 6.8 L5 9.6 L10.2 3.4" fill="none" stroke="#555" stroke-width="2.1"/></svg>
<div class="t" style="left:170px;top:185px;font-size:10px;color:#333">(All)</div>
<div class="t" style="left:170px;top:204px;font-size:10px;color:#333">(Sorted)</div>
<div style="left:150px;top:222px;width:58px;height:1px;background:#b4b4b4"></div>
<div style="left:141px;top:161px;width:74px;height:105px;border:2px solid #ff0000"></div>
<div style="left:216px;top:161px;width:255px;height:441px;border:2px solid #ff0000"></div>
<div style="left:475px;top:161px;width:667px;height:441px;border:2px solid #ff0000"></div></body></html>
